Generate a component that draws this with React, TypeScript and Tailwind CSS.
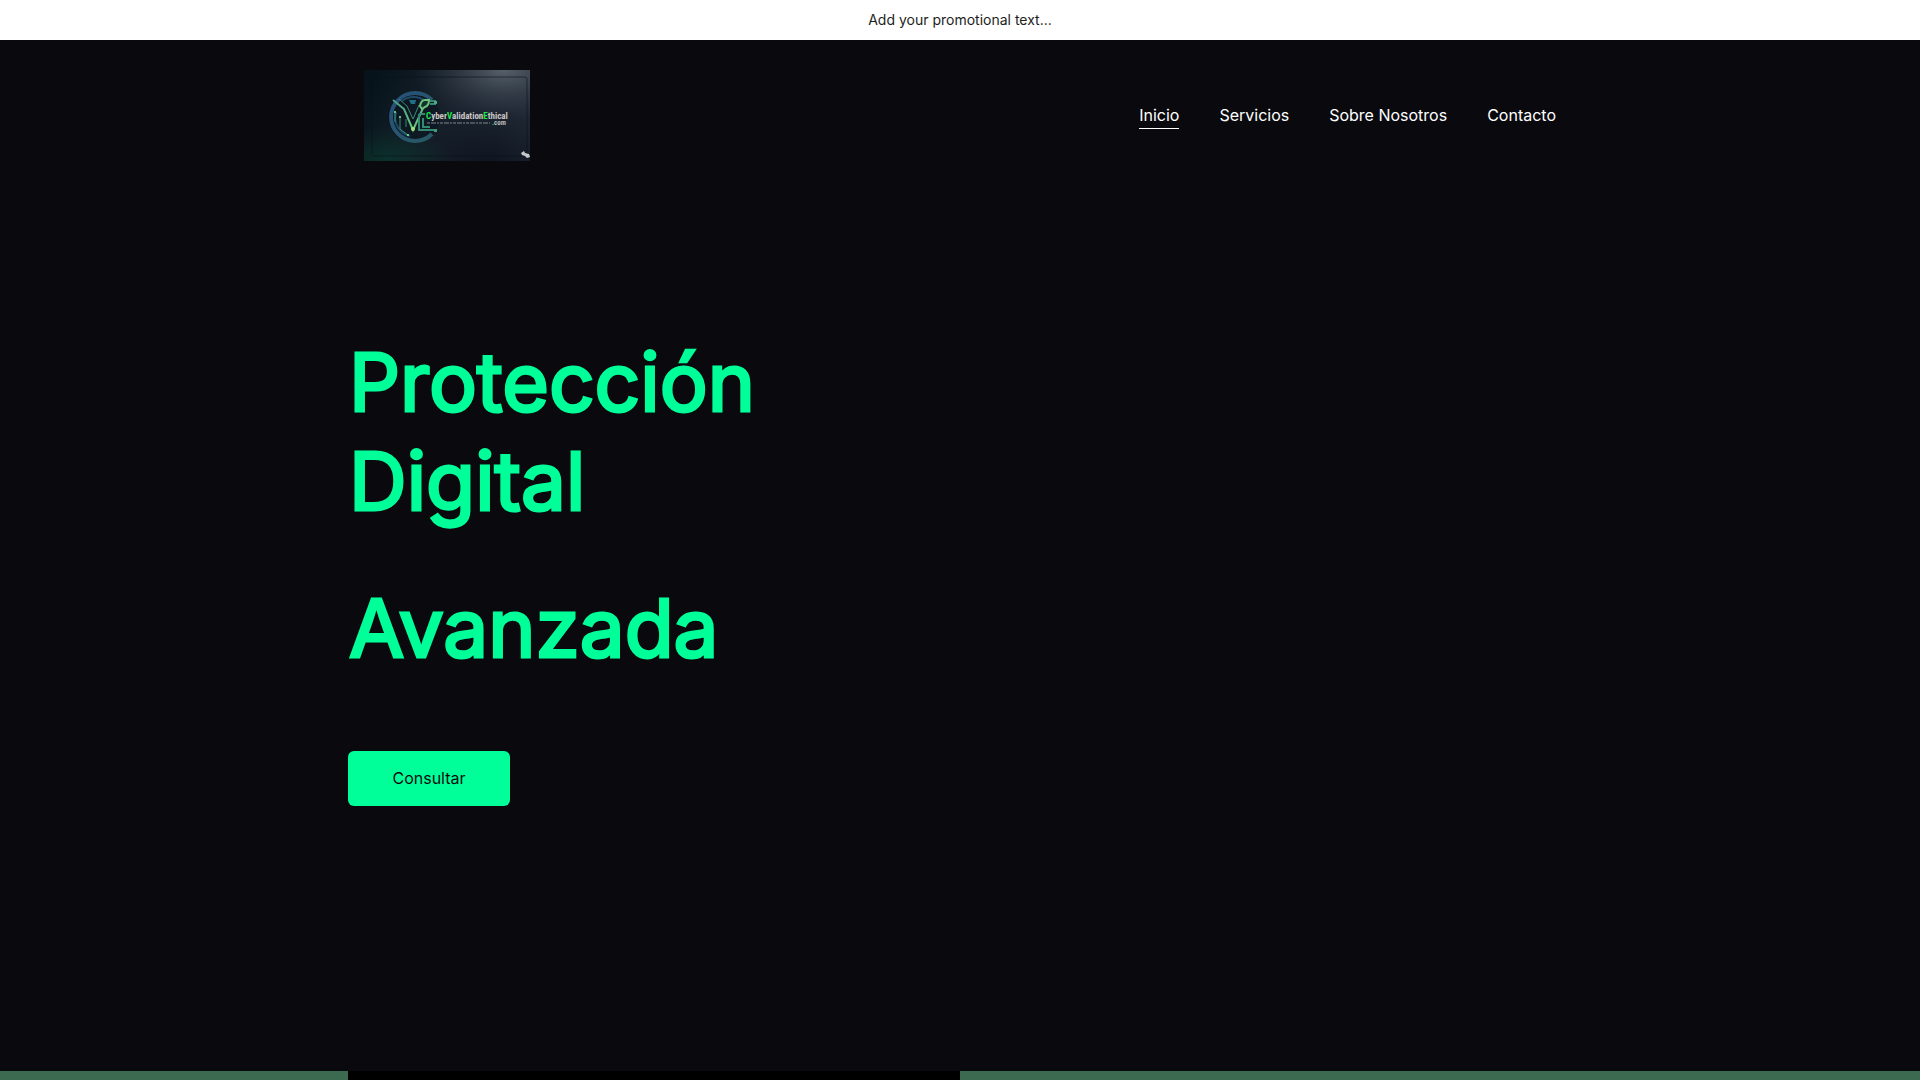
const links = [
  { label: "Inicio", href: "#inicio", active: true },
  { label: "Servicios", href: "#servicios", active: false },
  { label: "Sobre Nosotros", href: "#nosotros", active: false },
  { label: "Contacto", href: "#contacto", active: false },
];

function Logo() {
  return (
    <svg
      viewBox="0 0 166 91"
      className="h-[91px] w-[166px]"
      role="img"
      aria-label="CyberValidationEthical.com"
    >
      <defs>
        <linearGradient id="plate" x1="0" y1="0.2" x2="1" y2="0.5">
          <stop offset="0" stopColor="#06131a" />
          <stop offset="0.5" stopColor="#17202b" />
          <stop offset="1" stopColor="#202935" />
        </linearGradient>
        <radialGradient id="shine" cx="0.84" cy="0" r="0.55">
          <stop offset="0" stopColor="#6b757d" stopOpacity="0.75" />
          <stop offset="1" stopColor="#3b4651" stopOpacity="0" />
        </radialGradient>
        <radialGradient id="glow" cx="0.14" cy="1" r="0.38">
          <stop offset="0" stopColor="#07402f" stopOpacity="0.6" />
          <stop offset="1" stopColor="#07402f" stopOpacity="0" />
        </radialGradient>
        <radialGradient id="shade" cx="0.75" cy="1" r="0.6">
          <stop offset="0" stopColor="#080e18" stopOpacity="0.7" />
          <stop offset="1" stopColor="#080e18" stopOpacity="0" />
        </radialGradient>
        <linearGradient id="ring" x1="0" y1="0" x2="1" y2="1">
          <stop offset="0" stopColor="#27507c" />
          <stop offset="1" stopColor="#285a63" />
        </linearGradient>
        <linearGradient id="circuit" x1="0" y1="0" x2="0.3" y2="1">
          <stop offset="0" stopColor="#4c9a86" />
          <stop offset="1" stopColor="#67c678" />
        </linearGradient>
      </defs>
      <rect width="166" height="91" fill="url(#plate)" />
      <rect width="166" height="91" fill="url(#shine)" />
      <rect width="166" height="91" fill="url(#shade)" />
      <rect width="166" height="91" fill="url(#glow)" />
      <rect x="8" y="7" width="155" height="79" rx="2" fill="none" stroke="#0b121b" strokeOpacity="0.6" />
      <circle cx="50" cy="47" r="26" fill="#08131f" fillOpacity="0.5" />
      <path d="M68 30A24 24 0 1 0 68 64" fill="none" stroke="url(#ring)" strokeWidth="4" />
      <path d="M61 31A19 19 0 0 0 38 31M32 42A19 19 0 0 0 46 66" fill="none" stroke="#1f4a66" strokeWidth="2" />
      <path
        d="M29 30L40 39L49 60L60 36"
        fill="none"
        stroke="url(#circuit)"
        strokeWidth="2"
      />
      <path
        d="M35 29L43 36L49 49L55 35M31 41V52M36 46V59L44 65M42 49V57"
        fill="none"
        stroke="#3a8a78"
        strokeWidth="1"
      />
      <path d="M66 31H72M66 34H72M55 44V60H72M59 48V57H66M55 44H61" fill="none" stroke="#348a70" strokeWidth="2" />
      <path d="M56 36Q57 30 61 30H65Q65 36 61 37L58 39Z" fill="#12342f" stroke="#6fc27c" strokeWidth="2" />
      <path d="M45 30h7l-1 4h-4z" fill="#226f8a" />
      <circle cx="49" cy="59" r="2" fill="#9be27e" />
      <circle cx="31" cy="42" r="1" fill="#7ce68a" />
      <circle cx="36" cy="47" r="1" fill="#7ce68a" />
      <circle cx="44" cy="65" r="1" fill="#8af095" />
      <rect x="70" y="31" width="3" height="3" fill="#49a786" />
      <rect x="70" y="59" width="3" height="3" fill="#3f9c72" />
      <g
        fontFamily="'Liberation Sans Narrow', 'Roboto Condensed', 'Open Sans Condensed', Lato, sans-serif"
        fontWeight="700"
      >
        <text x="62" y="49" fontSize="9" fill="#c9c6c4">
          <tspan fill="#16e84a">C</tspan>yber<tspan fill="#16e84a">V</tspan>alidation
          <tspan fill="#16e84a">E</tspan>thical
        </text>
        <text x="128" y="55" fontSize="7" fill="#b9b9b9">
          <tspan fill="#16e84a">.</tspan>com
        </text>
      </g>
      <path d="M63 53H126" stroke="#98a0a3" strokeOpacity="0.4" strokeWidth="2" strokeDasharray="3 1 5 1 2 1" />
      <path d="M157 83l3-2 1 2 4 1 1 3-3 1-2-2-3-1z" fill="#c6c9cc" />
    </svg>
  );
}

export default function App() {
  return (
    <div className="flex min-h-screen flex-col bg-[#09090e] font-['Inter',sans-serif]">
      <aside className="bg-white py-[10px] text-center text-sm text-[#1d1e20]">
        Add your promotional text...
      </aside>
      <header className="mx-auto flex w-full max-w-[1224px] items-center justify-between px-4 py-[30px]">
        <a href="#inicio">
          <Logo />
        </a>
        <nav className="flex gap-10 text-base text-white">
          {links.map((link) => (
            <a
              key={link.label}
              href={link.href}
              className={link.active ? "border-b border-white py-px" : "border-b border-transparent py-px"}
            >
              {link.label}
            </a>
          ))}
        </nav>
      </header>
      <main className="flex grow flex-col">
        <section className="mx-auto w-full max-w-[1224px] grow pt-[141px]">
          <h1 className="flex w-[498px] max-w-full flex-col gap-12 pl-px text-[80px] leading-[99px] font-normal text-[#00ff99] [-webkit-text-stroke:3px_#00ff99]">
            <span>Protección Digital</span>
            <span>Avanzada</span>
          </h1>
          <button
            type="button"
            className="mt-[74px] h-[55px] w-[162px] rounded-md bg-[#00ff99] pb-px text-base text-[#0b0b0f]"
          >
            Consultar
          </button>
        </section>
        <section className="h-[9px] bg-[#3c6a50]">
          <div className="mx-auto h-full max-w-[1224px]">
            <div className="h-full w-1/2 bg-black" />
          </div>
        </section>
      </main>
    </div>
  );
}
